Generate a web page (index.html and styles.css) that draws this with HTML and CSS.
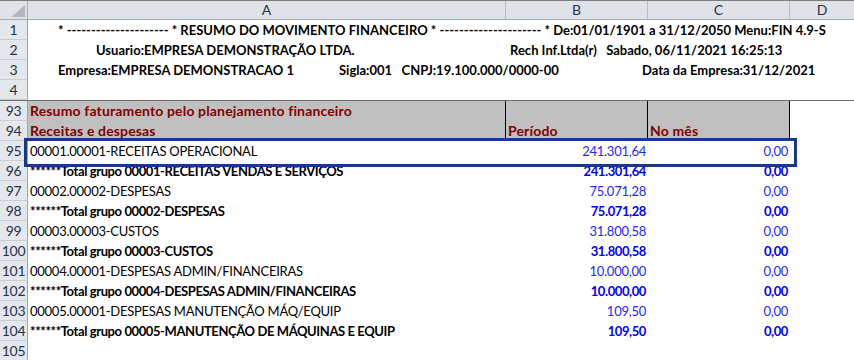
FILE: index.html
```html
<!DOCTYPE html>
<html lang="pt-BR">
<head>
<meta charset="utf-8">
<title>Resumo do movimento financeiro</title>
<link rel="stylesheet" href="styles.css">
</head>
<body>
<div class="sheet">
  <div class="row colhead">
    <div class="corner"><svg width="14" height="12" viewBox="0 0 14 12"><polygon points="14,0 14,12 0,12" fill="#b4b8be"/></svg></div>
    <div class="ch">A</div>
    <div class="ch">B</div>
    <div class="ch">C</div>
    <div class="ch last">D</div>
  </div>

  <div class="row">
    <div class="rh">1</div>
    <div class="hdr p1"><span>* --------------------- * RESUMO DO MOVIMENTO FINANCEIRO * --------------------- * De:01/01/1901 a 31/12/2050 Menu:FIN 4.9-S</span></div>
  </div>
  <div class="row">
    <div class="rh">2</div>
    <div class="hdr p2"><span class="w2a">Usuario:EMPRESA DEMONSTRAÇÃO LTDA.</span><span>Rech Inf.Ltda(r)   Sabado, 06/11/2021 16:25:13</span></div>
  </div>
  <div class="row">
    <div class="rh">3</div>
    <div class="hdr p1"><span class="w3a">Empresa:EMPRESA DEMONSTRACAO 1</span><span class="w3b">Sigla:001   CNPJ:19.100.000/0000-00</span><span>Data da Empresa:31/12/2021</span></div>
  </div>
  <div class="row">
    <div class="rh">4</div>
    <div class="hdr"></div>
  </div>

  <div class="freeze"></div>

  <div class="row">
    <div class="rh">93</div>
    <div class="c gray">Resumo faturamento pelo planejamento financeiro</div>
    <div class="c gray"></div>
    <div class="c gray"></div>
    <div class="c"></div>
  </div>
  <div class="row">
    <div class="rh">94</div>
    <div class="c gray">Receitas e despesas</div>
    <div class="c gray">Período</div>
    <div class="c gray">No mês</div>
    <div class="c"></div>
  </div>
  <div class="row sel">
    <div class="rh">95</div>
    <div class="c">00001.00001-RECEITAS OPERACIONAL</div>
    <div class="c num">241.301,64</div>
    <div class="c num">0,00</div>
    <div class="c"></div>
  </div>
  <div class="row tot">
    <div class="rh">96</div>
    <div class="c">******Total grupo 00001-RECEITAS VENDAS E SERVIÇOS</div>
    <div class="c num">241.301,64</div>
    <div class="c num">0,00</div>
    <div class="c"></div>
  </div>
  <div class="row">
    <div class="rh">97</div>
    <div class="c">00002.00002-DESPESAS</div>
    <div class="c num">75.071,28</div>
    <div class="c num">0,00</div>
    <div class="c"></div>
  </div>
  <div class="row tot">
    <div class="rh">98</div>
    <div class="c">******Total grupo 00002-DESPESAS</div>
    <div class="c num">75.071,28</div>
    <div class="c num">0,00</div>
    <div class="c"></div>
  </div>
  <div class="row">
    <div class="rh">99</div>
    <div class="c">00003.00003-CUSTOS</div>
    <div class="c num">31.800,58</div>
    <div class="c num">0,00</div>
    <div class="c"></div>
  </div>
  <div class="row tot">
    <div class="rh">100</div>
    <div class="c">******Total grupo 00003-CUSTOS</div>
    <div class="c num">31.800,58</div>
    <div class="c num">0,00</div>
    <div class="c"></div>
  </div>
  <div class="row">
    <div class="rh">101</div>
    <div class="c">00004.00001-DESPESAS ADMIN/FINANCEIRAS</div>
    <div class="c num">10.000,00</div>
    <div class="c num">0,00</div>
    <div class="c"></div>
  </div>
  <div class="row tot">
    <div class="rh">102</div>
    <div class="c">******Total grupo 00004-DESPESAS ADMIN/FINANCEIRAS</div>
    <div class="c num">10.000,00</div>
    <div class="c num">0,00</div>
    <div class="c"></div>
  </div>
  <div class="row">
    <div class="rh">103</div>
    <div class="c">00005.00001-DESPESAS MANUTENÇÃO MÁQ/EQUIP</div>
    <div class="c num">109,50</div>
    <div class="c num">0,00</div>
    <div class="c"></div>
  </div>
  <div class="row tot">
    <div class="rh">104</div>
    <div class="c">******Total grupo 00005-MANUTENÇÃO DE MÁQUINAS E EQUIP</div>
    <div class="c num">109,50</div>
    <div class="c num">0,00</div>
    <div class="c"></div>
  </div>
  <div class="row">
    <div class="rh">105</div>
    <div class="c"></div>
    <div class="c"></div>
    <div class="c"></div>
    <div class="c"></div>
  </div>
</div>
</body>
</html>
```

FILE: styles.css
```css
* { box-sizing: border-box; }

body {
  margin: 0;
  background: #ffffff;
  font-family: Lato, "Liberation Sans", sans-serif;
  font-size: 13px;
  letter-spacing: -0.25px;
  color: #000000;
  overflow: hidden;
}

.sheet {
  width: 854px;
  height: 360px;
  overflow: hidden;
}

.row {
  display: grid;
  grid-template-columns: 28px 478px 142px 142px 1fr;
  height: 20px;
  line-height: 20px;
  white-space: nowrap;
}

.colhead {
  background: #dfe2e7;
  border-top: 1px solid #7e7e7e;
  border-bottom: 1px solid #a5a8ad;
  line-height: 18px;
  font-size: 14px;
  letter-spacing: 0;
}

.corner {
  border-right: 1px solid #a5a8ad;
  display: flex;
  align-items: flex-end;
  justify-content: flex-end;
  padding: 0 2px 2px 0;
}

.ch {
  text-align: center;
  color: #26324a;
  border-right: 1px solid #b9bcc1;
}

.ch.last { border-right: none; }

.rh {
  background: #e4e7ec;
  border-right: 1px solid #9ea4ad;
  border-bottom: 1px solid #c9cdd4;
  text-align: center;
  color: #26324a;
  font-size: 14px;
  font-weight: 400;
  letter-spacing: -0.3px;
  line-height: 19px;
}

.hdr {
  grid-column: 2 / -1;
  display: flex;
  font-weight: 700;
  letter-spacing: 0;
  white-space: pre;
}

.p1 { padding-left: 30px; }
.p2 { padding-left: 68px; }

.w2a { flex: none; width: 414px; }
.w3a { flex: none; width: 281px; }
.w3b { flex: none; width: 303px; }

.freeze {
  height: 1px;
  background: #6e6e6e;
}

.c {
  padding-left: 2px;
}

.gray {
  background: #c0c0c0;
  color: #800000;
  font-weight: 700;
  font-size: 14px;
  letter-spacing: 0.15px;
  border-right: 1px solid #000000;
}

.num {
  text-align: right;
  padding-right: 2px;
  color: #2626ff;
}

.tot .c {
  font-weight: 700;
  letter-spacing: -0.4px;
}

.tot .num { color: #0000ff; }

.sel { position: relative; }

.sel::after {
  content: "";
  position: absolute;
  left: 24px;
  top: -3px;
  width: 767px;
  height: 23px;
  border: 3px solid #17388c;
  pointer-events: none;
}
```
